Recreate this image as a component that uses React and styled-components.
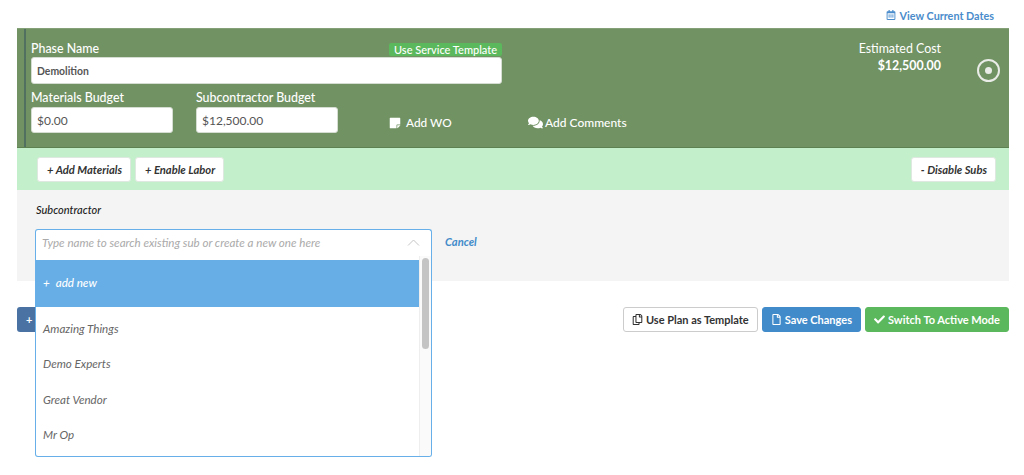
import styled, { createGlobalStyle } from 'styled-components'
import { FaRegCalendarAlt, FaStickyNote, FaComments, FaRegCopy, FaRegFile, FaCheck } from 'react-icons/fa'

const GlobalStyle = createGlobalStyle`
  body {
    margin: 0;
    background: #fff;
    font-family: Lato, "Noto Sans", sans-serif;
    color: #333;
  }
`

const Page = styled.div`
  width: 1024px;
  height: 475px;
  overflow: hidden;
  padding: 0 15px 0 17px;
  box-sizing: border-box;
`

const TopBar = styled.div`
  height: 28px;
  display: flex;
  justify-content: flex-end;
  align-items: center;
  padding: 2px 15px 0 0;
  box-sizing: border-box;
`

const DatesLink = styled.a`
  display: flex;
  align-items: center;
  gap: 4px;
  font-size: 10.8px;
  font-weight: 700;
  color: #4a8ccb;
`

const PhasePanel = styled.section`
  height: 120px;
  box-sizing: border-box;
  background: #719263;
  border-top: 1px solid #83a077;
  border-bottom: 1px solid #5d8150;
  padding: 0 9px 0 7px;
  display: flex;
  justify-content: space-between;
  color: #fff;
`

const PhaseLeft = styled.div`
  border-left: 2px solid #52705f;
  padding: 13px 0 0 5px;
  width: 471px;
`

const NameHeader = styled.div`
  display: flex;
  justify-content: space-between;
  align-items: flex-start;
  height: 15px;
`

const FieldLabel = styled.label`
  display: block;
  font-size: 12.4px;
  font-weight: 500;
  line-height: 14px;
  color: #fff;
`

const TemplateBadge = styled.span`
  background: #5cb85c;
  border-radius: 2px;
  padding: 0 5px;
  margin-top: 1px;
  font-size: 11px;
  line-height: 13px;
  font-weight: 500;
  color: #fff;
`

const TextBox = styled.div`
  box-sizing: border-box;
  height: ${(props) => props.height || 27}px;
  width: ${(props) => props.width || '100%'};
  background: #fff;
  border: 1px solid #d5ddd2;
  border-radius: 3px;
  padding: 0 5px;
  display: flex;
  align-items: center;
  font-size: ${(props) => props.fontSize || 12}px;
  font-weight: ${(props) => props.weight || 400};
  color: #555;
`

const BudgetRow = styled.div`
  display: flex;
  align-items: flex-end;
  margin-top: 7px;
`

const BudgetField = styled.div`
  flex: none;
  width: 165px;
  display: flex;
  flex-direction: column;
  gap: 2px;
`

const PanelAction = styled.span`
  flex: none;
  display: flex;
  align-items: center;
  gap: ${(props) => props.gap || 5}px;
  width: ${(props) => props.width}px;
  font-size: ${(props) => props.fontSize || 12}px;
  font-weight: 500;
  white-space: nowrap;
  padding-bottom: 3px;
  margin-left: ${(props) => props.offset || 0}px;
`

const CostBlock = styled.div`
  display: flex;
  align-items: flex-start;
  padding-top: 13px;
  gap: 36px;
`

const CostText = styled.div`
  text-align: right;
  font-size: 12.4px;
  line-height: 14px;
`

const CostValue = styled.div`
  font-weight: 700;
  margin-top: 3px;
`

const RadioMark = styled.span`
  width: 23px;
  height: 23px;
  box-sizing: border-box;
  margin-top: 17px;
  border: 2px solid #e9ece7;
  border-radius: 50%;
  display: flex;
  align-items: center;
  justify-content: center;
  &::after {
    content: '';
    width: 7px;
    height: 7px;
    border-radius: 50%;
    background: #e9ece7;
  }
`

const ToggleBar = styled.div`
  height: 42px;
  box-sizing: border-box;
  background: #c3f0cb;
  padding: 0 13px 0 20px;
  display: flex;
  align-items: center;
  gap: 4px;
`

const ToggleButton = styled.button`
  height: 25px;
  padding: 0 8px 0 9px;
  background: #fff;
  border: 1px solid #dfe8e0;
  border-radius: 3px;
  font-family: inherit;
  font-size: 11.2px;
  font-weight: 700;
  font-style: italic;
  color: #333;
  margin-left: ${(props) => (props.$pushRight ? 'auto' : '0')};
`

const SubSection = styled.div`
  position: relative;
  height: 91px;
  box-sizing: border-box;
  background: #f4f4f4;
  padding: 13px 0 0 18px;
`

const SubLabel = styled.div`
  font-size: 11px;
  font-style: italic;
  font-weight: 500;
  line-height: 14px;
  color: #222;
  padding-left: 1px;
`

const ComboRow = styled.div`
  display: flex;
  align-items: center;
  margin-top: 12px;
  gap: 13px;
`

const Combo = styled.div`
  position: relative;
  width: 397px;
  height: 27px;
  box-sizing: border-box;
  background: #fff;
  border: 1px solid #66afe9;
  border-bottom: none;
  border-radius: 3px 3px 0 0;
  display: flex;
  align-items: center;
  justify-content: space-between;
  padding: 0 11px 2px 6px;
  font-size: 11.6px;
  font-style: italic;
  color: #aaa;
`

const CancelLink = styled.a`
  font-size: 11.2px;
  font-style: italic;
  font-weight: 700;
  color: #428bca;
  margin-top: -2px;
`

const Menu = styled.div`
  position: absolute;
  z-index: 2;
  left: -1px;
  right: -1px;
  top: 26px;
  height: 201px;
  box-sizing: border-box;
  background: #fff;
  border: 1px solid #66afe9;
  border-top: none;
  border-radius: 0 0 3px 3px;
  overflow: hidden;
  padding-top: 4px;
`

const AddNew = styled.div`
  width: 384px;
  height: 47px;
  margin-bottom: 4px;
  background: #67aee6;
  color: #fff;
  display: flex;
  align-items: center;
  gap: 6px;
  padding: 0 0 2px 7px;
  box-sizing: border-box;
  font-size: 11.6px;
  font-style: italic;
  font-weight: 500;
`

const MenuItem = styled.div`
  height: 35.3px;
  display: flex;
  align-items: center;
  padding-left: 7px;
  font-size: 11.6px;
  font-style: italic;
  color: #666;
`

const ScrollTrack = styled.div`
  position: absolute;
  top: 0;
  right: 0;
  bottom: 0;
  width: 11px;
  border-left: 1px solid #eee;
  background: #fafafa;
`

const ScrollThumb = styled.div`
  margin: 2px 2px 0 2px;
  height: 91px;
  border-radius: 4px;
  background: #c4c4c4;
`

const FooterRow = styled.div`
  display: flex;
  align-items: center;
  justify-content: space-between;
  margin-top: 26px;
`

const AddPhaseButton = styled.button`
  width: 40px;
  height: 25px;
  border: none;
  border-radius: 3px;
  background: #4a73a4;
  color: #fff;
  font-family: inherit;
  font-size: 11px;
  font-weight: 700;
  text-align: left;
  padding-left: 9px;
`

const FooterActions = styled.div`
  display: flex;
  gap: 4px;
`

const ActionButton = styled.button`
  height: 25px;
  box-sizing: border-box;
  padding: 0 8px;
  border-radius: 3px;
  border: 1px solid ${(props) => props.$border};
  background: ${(props) => props.$bg};
  color: ${(props) => props.$color};
  font-family: inherit;
  font-size: 11px;
  font-weight: 700;
  display: flex;
  align-items: center;
  gap: 3px;
`

const subs = ['Amazing Things', 'Demo Experts', 'Great Vendor', 'Mr Op']

const App = () => {
  return (
    <Page>
      <GlobalStyle />
      <TopBar>
        <DatesLink>
          <FaRegCalendarAlt size={10} />
          View Current Dates
        </DatesLink>
      </TopBar>

      <PhasePanel>
        <PhaseLeft>
          <NameHeader>
            <FieldLabel>Phase Name</FieldLabel>
            <TemplateBadge>Use Service Template</TemplateBadge>
          </NameHeader>
          <TextBox weight={700} fontSize={10.4}>Demolition</TextBox>
          <BudgetRow>
            <BudgetField>
              <FieldLabel>Materials Budget</FieldLabel>
              <TextBox width="142px" height={26}>$0.00</TextBox>
            </BudgetField>
            <BudgetField>
              <FieldLabel>Subcontractor Budget</FieldLabel>
              <TextBox width="142px" height={26}>$12,500.00</TextBox>
            </BudgetField>
            <PanelAction width={139} offset={28} fontSize={11.8}>
              <FaStickyNote size={12} />
              Add WO
            </PanelAction>
            <PanelAction width={110} gap={2}>
              <FaComments size={15} />
              Add Comments
            </PanelAction>
          </BudgetRow>
        </PhaseLeft>
        <CostBlock>
          <CostText>
            Estimated Cost
            <CostValue>$12,500.00</CostValue>
          </CostText>
          <RadioMark />
        </CostBlock>
      </PhasePanel>

      <ToggleBar>
        <ToggleButton>+ Add Materials</ToggleButton>
        <ToggleButton>+ Enable Labor</ToggleButton>
        <ToggleButton $pushRight>- Disable Subs</ToggleButton>
      </ToggleBar>

      <SubSection>
        <SubLabel>Subcontractor</SubLabel>
        <ComboRow>
          <Combo>
            Type name to search existing sub or create a new one here
            <svg width="13" height="7" viewBox="0 0 13 7" fill="none" stroke="#c4c4c4" strokeWidth="1">
              <path d="M1 6.5 6.5 1 12 6.5" />
            </svg>
            <Menu>
              <AddNew>
                <span>+</span>
                add new
              </AddNew>
              {subs.map((name) => (
                <MenuItem key={name}>{name}</MenuItem>
              ))}
              <ScrollTrack>
                <ScrollThumb />
              </ScrollTrack>
            </Menu>
          </Combo>
          <CancelLink>Cancel</CancelLink>
        </ComboRow>
      </SubSection>

      <FooterRow>
        <AddPhaseButton>+</AddPhaseButton>
        <FooterActions>
          <ActionButton $bg="#fff" $border="#ccc" $color="#333">
            <FaRegCopy size={11} />
            Use Plan as Template
          </ActionButton>
          <ActionButton $bg="#428bca" $border="#428bca" $color="#fff">
            <FaRegFile size={11} />
            Save Changes
          </ActionButton>
          <ActionButton $bg="#5cb85c" $border="#5cb85c" $color="#fff">
            <FaCheck size={11} />
            Switch To Active Mode
          </ActionButton>
        </FooterActions>
      </FooterRow>
    </Page>
  )
}

export default App
